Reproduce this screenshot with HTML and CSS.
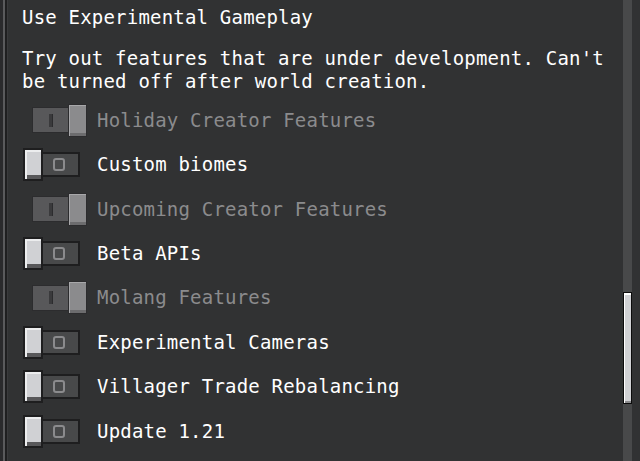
FILE: index.html
```html
<!DOCTYPE html>
<html lang="en">
<head>
    <meta charset="UTF-8">
    <meta name="viewport" content="width=device-width, initial-scale=1.0">
    <title>Experiments</title>
    <link rel="stylesheet" href="styles.css">
</head>
<body>
    <div class="screen">
        <div class="edge"></div>

        <div class="content">
            <h1 class="title">Use Experimental Gameplay</h1>
            <p class="desc">Try out features that are under development. Can't be turned off after world creation.</p>

            <div class="toggles">
                <div class="row disabled">
                    <div class="slot on">
                        <span class="track"><span class="mark-i"></span></span><span class="knob"></span>
                    </div>
                    <span class="label">Holiday Creator Features</span>
                </div>
                <div class="row">
                    <div class="slot off">
                        <span class="knob"></span><span class="track"><span class="mark-o"></span></span>
                    </div>
                    <span class="label">Custom biomes</span>
                </div>
                <div class="row disabled">
                    <div class="slot on">
                        <span class="track"><span class="mark-i"></span></span><span class="knob"></span>
                    </div>
                    <span class="label">Upcoming Creator Features</span>
                </div>
                <div class="row">
                    <div class="slot off">
                        <span class="knob"></span><span class="track"><span class="mark-o"></span></span>
                    </div>
                    <span class="label">Beta APIs</span>
                </div>
                <div class="row disabled">
                    <div class="slot on">
                        <span class="track"><span class="mark-i"></span></span><span class="knob"></span>
                    </div>
                    <span class="label">Molang Features</span>
                </div>
                <div class="row">
                    <div class="slot off">
                        <span class="knob"></span><span class="track"><span class="mark-o"></span></span>
                    </div>
                    <span class="label">Experimental Cameras</span>
                </div>
                <div class="row">
                    <div class="slot off">
                        <span class="knob"></span><span class="track"><span class="mark-o"></span></span>
                    </div>
                    <span class="label">Villager Trade Rebalancing</span>
                </div>
                <div class="row">
                    <div class="slot off">
                        <span class="knob"></span><span class="track"><span class="mark-o"></span></span>
                    </div>
                    <span class="label">Update 1.21</span>
                </div>
            </div>
        </div>

        <div class="scrollbar">
            <div class="thumb"></div>
        </div>
    </div>
</body>
</html>
```

FILE: styles.css
```css
body {
    margin: 0;
    padding: 0;
    background-color: #313233;
    font-family: "DejaVu Sans Mono", monospace;
    color: #ffffff;
    overflow: hidden;
}

.screen {
    display: flex;
    height: 461px;
}

.edge {
    width: 8px;
    flex-shrink: 0;
    background: linear-gradient(to right,
        #2a2a2c 0 3px,
        #5a5a5c 3px 5px,
        #1f1f20 5px 7px,
        #3a3a3c 7px 8px);
}

.content {
    flex: 1;
    padding: 6px 0 0 14px;
    font-size: 19px;
    letter-spacing: 0.2px;
    line-height: 23px;
}

.title {
    margin: 0;
    font-size: 19px;
    font-weight: normal;
}

.desc {
    margin: 18px 0 0 0;
}

.toggles {
    margin-top: 5px;
}

.row {
    display: flex;
    align-items: center;
    height: 44.43px;
}

.row.disabled .label {
    color: #8b8b8d;
}

/* switch area is 75px wide so labels line up */
.slot {
    width: 75px;
    flex-shrink: 0;
    display: flex;
    align-items: center;
    box-sizing: border-box;
}

.slot.off {
    padding-left: 1px;
}

.slot.on {
    padding-left: 10px;
}

.knob {
    width: 20px;
    height: 33px;
    box-sizing: border-box;
    border: 2px solid #1e1e1f;
    background-color: #d0d1d4;
    box-shadow: inset 2px 2px 0 #ecedee, inset 0 -4px 0 #58585a;
}

.track {
    display: flex;
    align-items: center;
    justify-content: center;
    width: 37px;
    height: 25px;
    box-sizing: border-box;
    border: 2px solid #1e1e1f;
    border-left: none;
    background-color: #48494a;
}

.mark-o {
    width: 12px;
    height: 13px;
    box-sizing: border-box;
    border: 2px solid #8b8b8d;
    border-radius: 3px;
    margin-right: 3px;
}

/* disabled, switched on */
.slot.on .track {
    width: 36px;
    height: 26px;
    border: 1px solid #2c2c2e;
    border-right: none;
    background-color: #58585a;
}

.mark-i {
    width: 3px;
    height: 13px;
    background-color: #3a3a3c;
    box-shadow: 1px 0 0 #2c2c2e;
}

.slot.on .knob {
    width: 19px;
    border: 1px solid #2c2c2e;
    background-color: #8b8b8d;
    box-shadow: inset 1px 1px 0 #a8a8aa, inset 0 -3px 0 #6c6c6e;
}

.scrollbar {
    width: 9px;
    margin-right: 8px;
    flex-shrink: 0;
    background-color: #48494a;
}

.thumb {
    margin-top: 292px;
    height: 112px;
    box-sizing: border-box;
    border: 1px solid #0c0c0c;
    background-color: #d0d1d4;
    box-shadow: inset 1px 2px 0 #ffffff, inset 0 -2px 0 #8b8b8d;
}
```
